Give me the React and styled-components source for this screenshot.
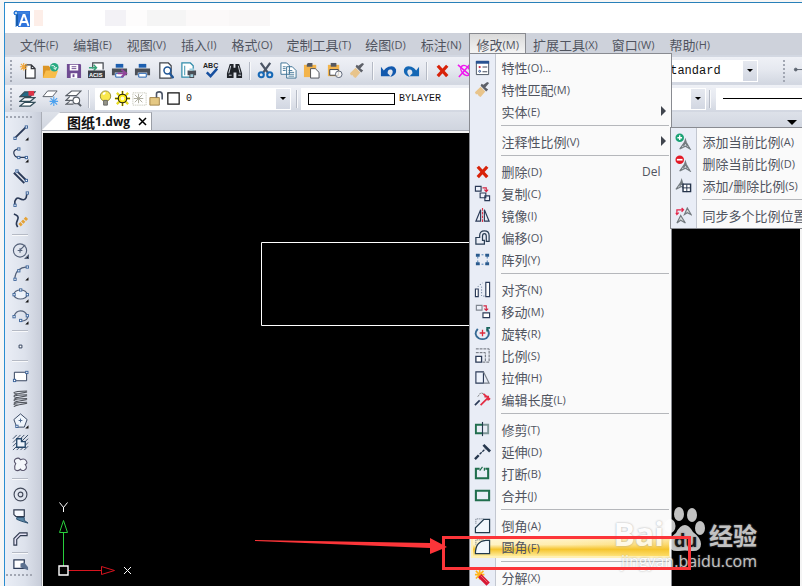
import React from "react";
import styled, { createGlobalStyle, css } from "styled-components";

const GlobalStyle = createGlobalStyle`
  * { box-sizing: border-box; }
  html, body, #root { height: 100%; }
  body {
    margin: 0;
    background: #f7f6f5;
    color: #50545f;
    font-family: "Open Sans", "Noto Sans CJK SC", sans-serif;
    font-size: 13px;
    overflow: hidden;
  }
  button, select { font: inherit; color: inherit; margin: 0; }
`;

/* ---------- icons, all on an 18 x 18 grid ---------- */
const N = "#2b3a57";
const dot = (x, y, k) => (
  <rect key={k} x={x - 1} y={y - 1} width="2.4" height="2.4" fill="#fff" stroke="#3d659b" strokeWidth="1" />
);
const corner = <path d="M17.5 14v3.5H14z" fill="#111" />;
const brush = (
  <g>
    <path d="M1 12l6-6 5 5-5 6-2-1-1-2-2 0z" fill="#e8c48b" />
    <path d="M7 5l6 6 2-2-3-2 4-5-2-1-4 3-2-1z" fill="#5d6068" />
  </g>
);
const cross = <path d="M4 4l10 11M14 4L4 15" stroke="#d82209" strokeWidth="3.4" fill="none" />;
const printer = (
  <g>
    <path d="M5 2h8v4H5z" fill="#1d5fb0" />
    <path d="M1 7h16v7h-3v-3H4v3H1z" fill="#4b4f57" />
    <path d="M5 12h8v4H5z" fill="#fff" stroke="#1d5fb0" />
  </g>
);
const compass = (x, y) => (
  <path d={`M${x} ${y}l-1 3-5 7 6-3 5 3-4-7zM${x - 2} ${y + 7}l2-4 2 4`} fill="none" stroke="#747b80" strokeWidth="1.2" />
);
const page = <path d="M7 3h6l4 4v10H7z M13 3v4h4" fill="#fff" stroke="#33363c" strokeWidth="1.3" />;

const ICONS = {
  newFile: (<g>{page}<path d="M5 1v8M1 5h8M2 2l6 6M8 2L2 8" stroke="#f2a73a" strokeWidth="1.2" /></g>),
  open: (<g><path d="M1 4h6l2 2v11H1z" fill="#dc9526" /><path d="M4 9h13l-3 8H1z" fill="#f8bd4b" /><circle cx="13" cy="5.5" r="4.5" fill="#27aa82" /><path d="M10 4q4-1 4 3m-2-1l2 2 1.500-2.500" stroke="#fff" fill="none" /></g>),
  save: (<g><path d="M2 2h14l1 1v14H2z" fill="#6f4b92" /><path d="M5 3h9v6H5zM6 12h7v5H6z" fill="#fff" /><path d="M7 5h5M7 7h5" stroke="#6f4b92" /><path d="M8 13h2v3H8z" fill="#6f4b92" /></g>),
  acis: (<g><path d="M5 7V1h11v7" fill="#fff" stroke="#44484f" strokeWidth="1.300" /><path d="M1 6h8m-3-3l3 3-3 3" stroke="#35a278" fill="none" strokeWidth="1.5" /><path d="M0 9h18v8H0z" fill="#3d4046" /><text x="1" y="15.500" fontSize="6" fontWeight="700" fill="#fff" fontFamily="Liberation Sans">ACIS</text></g>),
  plot: (<g>{printer}<path d="M7 12h8m-4-4l5 4-5 4" fill="none" stroke="#92459b" strokeWidth="2" /></g>),
  printer,
  preview: (<g><path d="M3 1h9l3 3v13H3z" fill="#fff" stroke="#41454c" strokeWidth="1.3" /><circle cx="11" cy="9" r="3.600" fill="#fff" stroke="#1f5595" strokeWidth="1.6" /><path d="M13.500 12l4 5" stroke="#1f5595" strokeWidth="2.4" /></g>),
  publish: (<g><path d="M2 1h9l3 3v12H2z" fill="#fff" stroke="#318caa" strokeWidth="1.3" /><path d="M5 4v10" stroke="#318caa" /><path d="M8 9h9v5h-2v3h-5v-3H8z" fill="#4b4f57" /><path d="M10 7h5v2h-5zM11 13h3v3h-3z" fill="#9fd0df" /></g>),
  spell: (<g><text x="0" y="6" fontSize="7.5" fontWeight="700" fill="#222" fontFamily="Liberation Sans">ABC</text><path d="M4 11l4 4 7-8" fill="none" stroke="#164f9f" strokeWidth="2.600" /></g>),
  find: (<g fill="#1f2329"><path d="M4 2h4v4h2V2h4l3 10v5h-6v-6H8v6H1v-5z" /><path d="M5 4l-2 8M13 4l2 8M3 14h3M13 14h3" stroke="#d7dbe2" strokeWidth="1" /></g>),
  cut: (<g fill="none"><path d="M4 1l8 11M14 1L6 12" stroke="#4b5565" strokeWidth="2.4" /><circle cx="4.500" cy="13.500" r="2.700" stroke="#1769b6" strokeWidth="2.2" /><circle cx="13.500" cy="13.500" r="2.700" stroke="#1769b6" strokeWidth="2.2" /></g>),
  copyDoc: (<g fill="#fff" stroke="#3c7194"><path d="M1 1h6l3 3v9H1zM7 5h6l4 4v8H7z" /><path d="M3 5h3M3 7h3M3 9h3M9 9h4M9 11h6M9 13h6M9 15h6" strokeWidth=".9" /></g>),
  paste: (<g><path d="M1 3h13v13H1z" fill="#f3b44b" /><path d="M5 1h5v4H4V3z" fill="#565961" /><path d="M8 7h5l4 4v6H8z" fill="#fff" stroke="#4d5057" /></g>),
  pasteBlock: (<g><path d="M2 3h12v12H2z" fill="#f3b44b" /><path d="M5 1h6v4H5z" fill="#565961" /><path d="M4 8h9v6H4z" fill="#fff" stroke="#3b414c" /><circle cx="13.500" cy="13" r="3.500" fill="#fffb" stroke="#596375" /></g>),
  brush,
  undo: <path d="M1 5v10h10l-3-3q0-5 4-4 3 2 0 6l-1 2q7-2 6-8-2-5-8-3-3 1-5 4z" fill="#1259ae" />,
  redo: <path d="M17 5v10H7l3-3q0-5-4-4-3 2 0 6l1 2q-7-2-6-8 2-5 8-3 3 1 5 4z" fill="#1467b5" />,
  cross,
  eraseAll: <g fill="none" stroke="#ef18ef" strokeWidth="1.600"><path d="M1 3l15 13M2 16L14 2" /><ellipse cx="9" cy="9" rx="6" ry="4" transform="rotate(50 9 9)" /></g>,
  layers: (<g strokeWidth="1.300" stroke="#334e5a"><path d="M6 13h11l-5 4H1z" fill="#fff" /><path d="M6 8h11l-5 4H1z" fill="#fff" /><path d="M6 2h11l-5 5H1z" fill="#246b86" /><path d="M10 1h6v5h-6z" fill="#de3447" stroke="none" /></g>),
  layerNew: (<g><path d="M6 1h10l-5 6H1z" fill="#fff" stroke="#585e66" /><path d="M12.500 7v10M8 12h9M9 8.500l7 7M16 8.500l-7 7" stroke="#4ba1ef" strokeWidth="1.2" /></g>),
  layerFind: (<g fill="#fff" stroke="#585e66" strokeWidth="1.2"><path d="M5 12L1 15h8M5 7l-4 4h8l3-2M7 1h10l-5 5H1z" /><circle cx="12" cy="11" r="3.500" /><path d="M14 14l3 3" strokeWidth="2" /></g>),
  bulb: (<g><circle cx="9" cy="6.500" r="5.500" fill="#fae84e" stroke="#978c36" /><path d="M7 11h4v5H7z" fill="#979688" stroke="#666" /><path d="M7 5q0-2 2-2" stroke="#fff" strokeWidth="2" fill="none" /></g>),
  sun: (<g><path d="M9 1v16M1 9h16M3 3l12 12M15 3L3 15" stroke="#e8dc20" strokeWidth="2.400" /><path d="M9 1v16M1 9h16" stroke="#55501c" strokeWidth="1" /><circle cx="9" cy="9" r="4.500" fill="#ffee13" stroke="#252315" strokeWidth="1.2" /><circle cx="9" cy="9" r="2" fill="#fffed0" /></g>),
  freeze: (<g><path d="M2 3h14v13H2z" fill="none" stroke="#b9b9a8" strokeDasharray="1 1" /><path d="M8 4v10M3 9h10M4 5l8 8M12 5l-8 8" stroke="#aaa99a" /></g>),
  lock: (<g><path d="M2 8h10v8H2z" fill="#e5c883" stroke="#a38348" /><path d="M9 8V4q0-2 3-2t3 3v5" fill="none" stroke="#4c5567" strokeWidth="1.700" /></g>),
  swatch: <path d="M3 3h12v12H3z" fill="#fff" stroke="#111" strokeWidth="1.300" />,
  dim: <g stroke="#5c6470" fill="#5c6470"><path d="M4 8h14" /><circle cx="4" cy="8" r="1.500" /></g>,

  line: <g><path d="M3 15L15 3" stroke={N} strokeWidth="2" />{dot(3, 15)}{dot(15, 3)}{corner}</g>,
  polyline: <g><path d="M7 3Q1 4 2 8t5 4h9" fill="none" stroke={N} strokeWidth="1.300" />{dot(7, 3)}{dot(7, 12)}{dot(15, 12)}{corner}</g>,
  multiline: <g><path d="M5 3l11 11M2 5l11 11" stroke={N} strokeWidth="2" />{dot(5, 3)}{dot(15, 13)}</g>,
  spline: <g><path d="M3 16V12q2-5 5-3 5 3 7-1l1-5" fill="none" stroke={N} strokeWidth="1.700" />{dot(3, 16)}{dot(16, 3)}</g>,
  sketch: <g><path d="M2 2q6 2 4 6t-1 6l1 2" fill="none" stroke={N} strokeWidth="1.700" /><path d="M8 14l8-8" stroke="#e5a236" strokeWidth="3.500" strokeDasharray="3 1" /></g>,
  circle: <g fill="none" stroke="#536078" strokeWidth="1.200"><circle cx="8.500" cy="9" r="7" /><path d="M6 9h5M8.500 6.500v5M9 8l5-5" />{corner}</g>,
  arc: <g><path d="M3 15Q4 4 16 3" fill="none" stroke="#536078" strokeWidth="1.200" />{dot(3, 16)}{dot(7, 7)}{dot(16, 3)}{corner}</g>,
  ellipse: <g><ellipse cx="9" cy="9" rx="7" ry="4.800" fill="#edf2fa" stroke="#536078" strokeWidth="1.200" />{dot(2, 9)}{dot(9, 4)}{dot(16, 9)}{corner}</g>,
  ellipseArc: <g><path d="M2 9Q4 3 9 3t7 5-6 6" fill="none" stroke="#536078" strokeWidth="1.200" />{dot(2, 9)}{dot(16, 8)}{dot(9, 13)}{corner}</g>,
  point: <path d="M7.500 7.500h3v3h-3z" fill="#fff" stroke={N} />,
  rectangle: <g><path d="M2.500 4.500h13v9h-13z" fill="#fff" stroke={N} />{dot(2.500, 13)}{dot(15.500, 4.500)}</g>,
  helix: <g fill="none" stroke="#50545c" strokeWidth="1.100">{[3, 7, 11, 15].map((y) => <path key={y} d={`M16 ${y - 2}q-13 0-14 2 1 2 14-1-13 2-14 4`} />)}</g>,
  polygon: <g><path d="M9 2l7 6-3 8H5L2 8z" fill="#eff5fc" stroke="#34445f" /><path d="M7 9h4M9 7v4" stroke="#49658b" />{dot(5, 15)}{corner}</g>,
  region: <g><path d="M1 5l4-4M1 9l8-8M1 13L13 1M1 17L17 1M5 17L17 5M9 17l8-8M13 17l4-4" stroke="#354964" /><path d="M5 5h5v3h4v6H5z" fill="#eef4fc" stroke="#254769" strokeWidth="1.400" /></g>,
  cloud: <path d="M4 8Q1 5 4 3q3-2 5 1 4-2 6 1 2 3-1 4 3 4-1 6-3 1-4-1-4 3-6 0-1-3 1-6z" fill="#f4f7fb" stroke="#59566d" strokeWidth="1.200" />,
  donut: <g fill="none" stroke="#42495a" strokeWidth="1.200"><circle cx="9" cy="9" r="6.800" /><circle cx="9" cy="9" r="2.500" /></g>,
  wipeout: <g><path d="M2 2h11v7H4L2 7z" fill="#f7faff" stroke="#303b50" strokeWidth="1.300" /><path d="M5 10h8v3l4 3-7-2-5-2z" fill="#5985a5" stroke="#284c6c" /></g>,
  pipe: <path d="M2 16v-7l6-6h8v3H9l-4 4v6z" fill="#e5e3f5" stroke="#303b50" strokeWidth="1.200" />,
  hatch: <g><path d="M2 4h11v9H2z" fill="#fff" stroke={N} strokeWidth="1.300" /><path d="M9 12V8l4-1 4 5v3z" fill="#5c7190" /></g>,

  properties: <g><path d="M2.500 2.500h13v14h-13z" fill="#fff" stroke="#47515e" /><path d="M2 2h14v3H2z" fill="#285291" /><path d="M9 8.500h5M9 13.500h5" stroke="#394151" /><circle cx="6" cy="8.500" r="1.200" fill="#c82e48" /><circle cx="6" cy="13" r="1" fill="none" stroke="#294d8b" /></g>,
  copyObj: <g fill="none" stroke={N} strokeWidth="1.200"><path d="M1.500 1.500h6v5h-6zM6.500 8.500h6v5h-6zM11.500 11.500h5v5h-5z" fill="#edf1fa" /><path d="M9 3h4v4m-2-2l2 2 2-2" stroke="#d42440" /></g>,
  mirror: <g fill="none" stroke={N} strokeWidth="1.200"><path d="M7 3v12H2zM11 3v12h5z" /><path d="M9 1v16" stroke="#dc3147" strokeDasharray="3 1" /></g>,
  offset: <g fill="none" stroke="#293d54" strokeWidth="1.300"><path d="M2 16V9h4V7q0-5 5-5t5 5v6h-3V8q0-3-2-3T9 8v4h2v4z" /></g>,
  array: <g><path d="M4 4h10v10H4z" fill="none" stroke="#477bb3" strokeDasharray="2 2" /><path d="M2 3h4v3H2zM12 3h4v3h-4zM2 12h4v3H2zM12 12h4v3h-4z" fill="#28598d" /></g>,
  align: <g fill="none" stroke={N} strokeWidth="1.200"><path d="M1.500 8.500h3v8h-3zM12.500 1.500h4v15h-4z" fill="#fff" /><path d="M4 6l5-4M8 6v10h3" stroke="#667993" strokeDasharray="1 2" /></g>,
  move: <g fill="none" strokeWidth="1.200"><path d="M2.500 2.500h6v5h-6z" stroke="#808791" fill="#edf1fa" /><path d="M9.500 10.500h7v5h-7z" stroke={N} fill="#fff" /><path d="M10 3h3v5m-2-2l2 2 2-2" stroke="#d42440" /></g>,
  rotate: <g fill="none" strokeWidth="2"><path d="M4 4Q-1 10 5 14q4 2 8 0 5-4 1-10" stroke="#356994" /><path d="M14 7V3h3" stroke="#1a655d" /><path d="M9 5v7M6 8.500h6" stroke="#dd2b3c" strokeWidth="1.400" /></g>,
  scale: <g fill="none" stroke="#60656e"><path d="M2 2h14v14H9M2 6h10v10" strokeDasharray="3 1" /><path d="M2 10h6v6H2z" stroke={N} strokeWidth="1.400" fill="#fff" /></g>,
  stretch: <g fill="none" strokeWidth="1.200"><path d="M2 3h8v12H2z" fill="#eef3fc" stroke={N} /><path d="M10 3l6 12h-6" stroke="#79808b" /></g>,
  lengthen: <g fill="none" strokeWidth="1.800"><path d="M1 15l5-5" stroke={N} /><path d="M4 6l3-4 4 1" stroke="#777" strokeWidth="1" strokeDasharray="2 1" /><path d="M7 15l8-8M10 3l7 6M11 6h4v4" stroke="#e32b43" /></g>,
  trim: <g fill="none" strokeWidth="2"><path d="M9 4H2v9h7" stroke="#206e4d" /><path d="M9 4h6v9H9" stroke="#7e9697" /><path d="M9 1v15" stroke="#23384d" strokeWidth="1.200" /></g>,
  extend: <g fill="none" stroke="#25364d"><path d="M10 2l7 7" strokeWidth="2.800" /><path d="M1 17l4-4" strokeWidth="2.500" /><path d="M6 12l6-6" strokeDasharray="3 1" strokeWidth="1.400" /></g>,
  breakObj: <g fill="none" stroke="#206e4d" strokeWidth="2.200"><path d="M6 4H2v10h13V4h-3" /><path d="M6 6l3-4M11 6V3" strokeWidth="1.300" /></g>,
  join: <path d="M2 4h14v10H2z" fill="none" stroke="#206e4d" strokeWidth="2.200" />,
  chamfer: <g><path d="M2 7V2h8" fill="none" stroke="#53606e" strokeDasharray="1 1" /><path d="M1.500 16.500v-5l9-9h6v14z" fill="#f2f7fc" stroke="#21394c" strokeWidth="1.300" /></g>,
  fillet: <g><path d="M2 7V2h8" fill="none" stroke="#53606e" strokeDasharray="1 1" /><path d="M1.500 16.500q0-13 11-14h4v14z" fill="#f2f7fc" stroke="#21394c" strokeWidth="1.300" /></g>,
  explode: <g><path d="M6 1v10M1 6h10M2 2l8 8M10 2l-8 8" stroke="#ffb51c" strokeWidth="1.700" /><path d="M6 7l9 9" stroke="#d71835" strokeWidth="5" /><path d="M7 7l7 7" stroke="#f36c71" /></g>,
  scaleAdd: <g>{compass(11, 7)}<circle cx="5" cy="5" r="4.500" fill="#1ba275" /><path d="M2.500 5h5M5 2.500v5" stroke="#fff" strokeWidth="1.500" /></g>,
  scaleDel: <g>{compass(11, 7)}<circle cx="5" cy="5" r="4.500" fill="#e31926" /><path d="M2 5h6" stroke="#fff" strokeWidth="1.800" /></g>,
  scaleEdit: <g>{compass(7, 3)}<path d="M8.500 7.500h8v8h-8z" fill="#fff" stroke="#25334a" strokeWidth="1.500" /><path d="M8 11.500h8M12.500 8v8" stroke="#25334a" /></g>,
  scaleSync: <g><path d="M2 8V3h7m-2-2l2 2-2 2M1 6l1 2 2-2" stroke="#e22549" strokeWidth="1.300" fill="none" /><path d="M13 1l-3 7 3-2 4 2zM6 9l-4 8 4-3 5 3z" fill="#d7dcda" stroke="#747b80" strokeWidth="1.200" /></g>,
};

const Glyph = styled.svg`
  display: block;
  flex: none;
  width: 17px;
  height: 17px;
`;
const Icon = ({ name }) => (
  <Glyph viewBox="0 0 18 18" aria-hidden="true">{ICONS[name]}</Glyph>
);

/* ---------- window ---------- */
const Stage = styled.div`
  position: relative;
  height: 100vh;
  padding: 2px 0 0 4px;
  overflow: hidden;
`;
const Window = styled.div`
  display: flex;
  flex-direction: column;
  height: 100%;
  border-top: 1px solid #2880b9;
  border-left: 1px solid #2a8cd0;
  background: #d3d8e2;
`;
const TitleBar = styled.header`
  display: flex;
  align-items: center;
  flex: none;
  height: 30px;
  padding-left: 8px;
  background: #fff;
`;
const Logo = styled.svg`
  width: 17px;
  height: 17px;
  margin-right: 4px;
`;
const Smudge = styled.span`
  width: ${(p) => p.$w}px;
  height: 16px;
  background: ${(p) => p.$c};
`;

const MenuBar = styled.nav`
  display: flex;
  flex: none;
  gap: 1px;
  height: 22px;
  padding-left: 8px;
  background: #ced2db;
`;
const MenuSlot = styled.div`
  position: relative;
  flex: none;
`;
const MenuTitle = styled.button`
  display: flex;
  align-items: center;
  height: 22px;
  padding: 0 ${(p) => (p.$long ? 5 : 6)}px;
  border: 1px solid transparent;
  background: none;
  white-space: nowrap;
  ${(p) => p.$open && css`
    border-color: #898b91;
    border-bottom-color: #f5f5f5;
    background: linear-gradient(#dadada, #f5f5f5);
  `}
`;
const Key = styled.span`
  font-size: 11px;
  padding-top: 1px;
`;

const Toolbars = styled.div`
  display: flex;
  flex: none;
  flex-direction: column;
  gap: 1px;
  padding-top: 2px;
`;
const ToolRow = styled.div`
  display: flex;
  align-items: center;
  height: 27px;
  padding-left: 5px;
  overflow: hidden;
  background: linear-gradient(#eff1f6, #e6e9f0 45%, #d2d7e1);
`;
const Grip = styled.span`
  flex: none;
  width: ${(p) => (p.$flat ? "28px" : "3px")};
  height: ${(p) => (p.$flat ? "3px" : "22px")};
  margin: ${(p) => (p.$flat ? "3px 0 2px" : "0 3px 0 0")};
  background: radial-gradient(circle at 1px 1px, #a2a7b3 1px, transparent 1px) 0 0 / 4px 4px;
`;
const ToolButton = styled.button`
  display: flex;
  align-items: center;
  justify-content: center;
  flex: none;
  width: 23px;
  height: 22px;
  padding: 0;
  border: 0;
  background: none;
`;
const Split = styled.span`
  flex: none;
  width: 2px;
  height: 18px;
  margin: 0 3px;
  border-left: 1px solid #b5bac5;
  border-right: 1px solid #f8f9fb;
`;
const Gap = styled.span`
  flex: 0 0 ${(p) => p.$w}px;
`;
const Combo = styled.label`
  position: relative;
  display: flex;
  align-items: center;
  flex: none;
  width: ${(p) => p.$w}px;
  height: 22px;
  padding-left: ${(p) => p.$pad || 2}px;
  background: #fff;
  color: #111;
`;
const Select = styled.select`
  flex: 1;
  min-width: 0;
  height: 22px;
  padding: 0 18px 0 4px;
  border: 0;
  appearance: none;
  background: transparent;
  color: #111;
  font-family: "Liberation Mono", monospace;
  font-size: 10px;
`;
const WideSelect = styled(Select)`
  font-size: 12px;
`;
const DropMark = styled.span`
  position: absolute;
  top: 1px;
  right: 1px;
  display: grid;
  place-items: center;
  width: 14px;
  height: 20px;
  background: linear-gradient(#e6e9f0, #d2d7e2);
  pointer-events: none;
`;
const Triangle = styled.span`
  width: 0;
  height: 0;
  border: solid transparent;
  border-width: ${(p) => p.$s || 3}px ${(p) => p.$s || 3}px 0;
  border-top-color: #000;
`;
const ComboIcons = styled.span`
  display: flex;
`;
const ColorBar = styled.span`
  width: 87px;
  height: 12px;
  border: 1px solid #000;
`;
const LineSample = styled.span`
  flex: 1 0 80px;
  height: 1px;
  background: #000;
`;

const Body = styled.div`
  display: flex;
  flex: 1;
  min-height: 0;
`;
const SideBar = styled.aside`
  display: flex;
  flex: none;
  flex-direction: column;
  align-items: center;
  width: 37px;
  padding: 1px 6px 0 0;
  overflow: hidden;
  border-right: 1px solid #a9adb6;
  background: linear-gradient(90deg, #eaeef6, #dde2ec 55%, #c8cdd9);
`;
const SideButton = styled(ToolButton)`
  width: 28px;
  height: ${(p) => (p.$short ? "14px" : "22px")};
  overflow: hidden;
`;
const SideSplit = styled.span`
  flex: none;
  width: 16px;
  height: 2px;
  margin: 3px 0;
  border-top: 1px solid #b5bac5;
  border-bottom: 1px solid #f8f9fb;
`;
const Workspace = styled.main`
  display: flex;
  flex: 1;
  flex-direction: column;
  min-width: 0;
  padding-right: 2px;
  background: #f4f4f4;
`;
const TabStrip = styled.div`
  display: flex;
  align-items: flex-end;
  justify-content: space-between;
  flex: none;
  height: 19px;
  margin-right: -2px;
  padding-right: 5px;
  border-bottom: 1px solid #a9adb6;
  background: linear-gradient(#dde1e9, #d0d5df);
`;
const Tab = styled.div`
  display: flex;
  align-items: center;
  gap: 8px;
  height: 18px;
  padding: 0 4px 0 25px;
  background: #fff;
  border-right: 1px solid #9599a2;
  border-top: 1px solid #b9bcc4;
  clip-path: polygon(18px 0, 100% 0, 100% 100%, 0 100%);
  color: #111;
  font-family: "Open Sans", "Noto Sans CJK SC", sans-serif;
  font-size: 12px;
  font-weight: 700;
  white-space: nowrap;
`;
const TabTitle = styled.span`
  display: flex;
  align-items: center;
`;
const TabName = styled.span`
  font-size: 14px;
`;
const TabClose = styled.button`
  display: flex;
  padding: 0;
  border: 0;
  background: none;
`;
const TabMenu = styled.button`
  display: flex;
  padding: 5px 0;
  border: 0;
  background: none;
`;
const Canvas = styled.div`
  position: relative;
  flex: 1;
  min-height: 0;
  margin: 2px 0 0 1px;
  overflow: hidden;
  background: #000;
`;
const Drawing = styled.svg`
  position: absolute;
  inset: 0;
  width: 100%;
  height: 100%;
`;
const Ucs = styled.svg`
  position: absolute;
  left: 0;
  bottom: 0;
  width: 100px;
  height: 96px;
`;

/* ---------- drop-down menu ---------- */
const Menu = styled.ul`
  position: absolute;
  z-index: 2;
  top: ${(p) => (p.$sub ? "-3px" : "20px")};
  left: ${(p) => (p.$sub ? "100%" : "0")};
  width: ${(p) => (p.$sub ? "170px" : "203px")};
  margin: 0;
  padding: 2px 1px;
  list-style: none;
  border: 1px solid #898b91;
  background: linear-gradient(90deg, #e9edf6 25px, #c3c7d0 25px, #c3c7d0 26px, #fafafa 26px);
`;
const MenuRow = styled.li`
  position: relative;
`;
const MenuItem = styled.button`
  display: flex;
  align-items: center;
  width: 100%;
  height: 22px;
  padding: 0 10px 0 3px;
  border: 0;
  background: none;
  white-space: nowrap;
  text-align: left;
  ${(p) => p.$active && css`
    border: 1px solid #fff0b5;
    border-width: 1px 1px 2px 2px;
    padding: 0 9px 0 1px;
    background: linear-gradient(#fff8dccc, #fff1b866 40%, #f5c42e 65%, #ffe88199),
      linear-gradient(90deg, #fff6d5, #ffe79a 50%, #f9c83a);
  `}
`;
const Label = styled.span`
  display: flex;
  align-items: center;
  flex: 1;
  padding-left: 10px;
`;
const Shortcut = styled.span`
  font-size: 12px;
`;
const SubArrow = styled.span`
  border: solid transparent;
  border-width: 5px 0 5px 5px;
  border-left-color: #41454e;
  margin-right: -6px;
`;
const MenuSplit = styled.li`
  height: 1px;
  margin: 3px 1px 4px 30px;
  background: #b5b7bb;
`;

/* ---------- overlays ---------- */
const Watermark = styled.div`
  position: absolute;
  z-index: 3;
  right: 45px;
  bottom: 16px;
  display: flex;
  flex-direction: column;
  align-items: flex-end;
  opacity: .76;
  color: #fff;
  text-shadow: 0 0 2px #8a8a8a;
  font-family: "Open Sans", "Noto Sans CJK SC", sans-serif;
  pointer-events: none;
`;
const Brand = styled.div`
  display: flex;
  align-items: flex-end;
  height: 48px;
  font-size: 32px;
  font-weight: 700;
  line-height: 36px;
`;
const BrandCn = styled.span`
  padding-left: 3px;
  font-size: 24px;
  line-height: 32px;
`;
const Paw = styled.svg`
  width: 42px;
  height: 46px;
`;
const Site = styled.div`
  font-size: 16px;
  line-height: 18px;
`;
const Callout = styled.svg`
  position: absolute;
  z-index: 4;
  left: 250px;
  top: 530px;
  width: 446px;
  height: 44px;
  pointer-events: none;
`;

const MENUS = [
  ["文件", "F"], ["编辑", "E"], ["视图", "V"], ["插入", "I"], ["格式", "O"], ["定制工具", "T"],
  ["绘图", "D"], ["标注", "N"], ["修改", "M"], ["扩展工具", "X"], ["窗口", "W"], ["帮助", "H"],
];
const SCALE_MENU = [
  ["scaleAdd", "添加当前比例", "(A)"], ["scaleDel", "删除当前比例", "(D)"],
  ["scaleEdit", "添加/删除比例", "(S)"], null, ["scaleSync", "同步多个比例位置", ""],
];
const MODIFY_MENU = [
  ["properties", "特性", "(O)..."], ["brush", "特性匹配", "(M)"], ["", "实体", "(E)", { arrow: true }], null,
  ["", "注释性比例", "(V)", { arrow: true, sub: SCALE_MENU }], null,
  ["cross", "删除", "(D)", { shortcut: "Del" }], ["copyObj", "复制", "(C)"], ["mirror", "镜像", "(I)"],
  ["offset", "偏移", "(O)"], ["array", "阵列", "(Y)"], null,
  ["align", "对齐", "(N)"], ["move", "移动", "(M)"], ["rotate", "旋转", "(R)"], ["scale", "比例", "(S)"],
  ["stretch", "拉伸", "(H)"], ["lengthen", "编辑长度", "(L)"], null,
  ["trim", "修剪", "(T)"], ["extend", "延伸", "(D)"], ["breakObj", "打断", "(B)"], ["join", "合并", "(J)"], null,
  ["chamfer", "倒角", "(A)"], ["fillet", "圆角", "(F)", { active: true }], null, ["explode", "分解", "(X)"],
];
const STANDARD = [
  "newFile", "open", "save", "acis", "plot", "printer", "preview", "publish", "spell", "find", null,
  "cut", "copyDoc", "paste", "pasteBlock", "brush", null, "undo", "redo", null, "cross", "eraseAll",
];
const DRAW = [
  "line", "polyline", "multiline", "spline", "sketch", null, "circle", "arc", "ellipse", "ellipseArc", null,
  "point", null, "rectangle", "helix", "polygon", "region", "cloud", null, "donut", "wipeout", "pipe", null,
];

function DropMenu({ items, sub, label }) {
  return (
    <Menu $sub={sub} aria-label={label}>
      {items.map((item, i) => {
        if (!item) return <MenuSplit key={i} role="separator" />;
        const [icon, text, key, extra = {}] = item;
        return (
          <MenuRow key={i}>
            <MenuItem $active={extra.active}>
              <Icon name={icon} />
              <Label>{text}<Key>{key}</Key></Label>
              {extra.shortcut && <Shortcut>{extra.shortcut}</Shortcut>}
              {extra.arrow && <SubArrow />}
            </MenuItem>
            {extra.sub && <DropMenu items={extra.sub} sub label={text} />}
          </MenuRow>
        );
      })}
    </Menu>
  );
}

function DropDown({ width, pad, label, value, wide, children }) {
  const Field = wide ? WideSelect : Select;
  return (
    <Combo $w={width} $pad={pad}>
      {children}
      {value && <Field aria-label={label} defaultValue={value}><option>{value}</option></Field>}
      <DropMark><Triangle /></DropMark>
    </Combo>
  );
}

const tools = (names) =>
  names.map((n, i) => (n ? <ToolButton key={i} aria-label={n}><Icon name={n} /></ToolButton> : <Split key={i} />));

export default function App() {
  return (
    <Stage>
      <GlobalStyle />
      <Window>
        <TitleBar>
          <Logo viewBox="0 0 17 17" aria-label="CAD">
            <path d="M1 1h16v16H5V5H1z" fill="#2f74dc" />
            <path d="M0 3h16M3 0v17" stroke="#4f91dc" />
            <path d="M3 4h2v12H3z" fill="#175dac" />
            <path d="M6.500 16L10.500 5h1L15.500 16M8 12h6" fill="none" stroke="#fff" strokeWidth="2" />
            <circle cx="3" cy="3" r="1.500" fill="#fff" stroke="#1b72d2" />
          </Logo>
          <Smudge $w={9} $c="#fdeee8" />
          <Gap $w={62} />
          <Smudge $w={21} $c="#f3f2f6" />
          <Smudge $w={21} $c="#fdfcfc" />
          <Smudge $w={39} $c="#f5f5f5" />
          <Smudge $w={43} $c="#fbf9f9" />
          <Smudge $w={41} $c="#f9f7f7" />
        </TitleBar>
        <MenuBar>
          {MENUS.map(([text, key]) => {
            const open = key === "M";
            return (
              <MenuSlot key={text}>
                <MenuTitle $open={open} $long={text.length > 2}>{text}<Key>({key})</Key></MenuTitle>
                {open && <DropMenu items={MODIFY_MENU} label={text} />}
              </MenuSlot>
            );
          })}
        </MenuBar>
        <Toolbars>
          <ToolRow>
            <Grip />
            {tools(STANDARD)}
            <Gap $w={180} />
            <DropDown width={101} label="文字样式" value="Standard" wide />
            <Gap $w={25} />
            <Grip />
            <ToolButton aria-label="dim"><Icon name="dim" /></ToolButton>
          </ToolRow>
          <ToolRow>
            <Grip />
            {tools(["layers", "layerNew", "layerFind", null])}
            <Gap $w={2} />
            <DropDown width={196} label="图层" value="0">
              <ComboIcons>
                {["bulb", "sun", "freeze", "lock", "swatch"].map((n) => <Icon key={n} name={n} />)}
              </ComboIcons>
            </DropDown>
            <Gap $w={2} /><Split />
            <DropDown width={197} pad={7} label="颜色" value="BYLAYER"><ColorBar /></DropDown>
            <Split />
            <DropDown width={200} />
            <Split />
            <Gap $w={2} />
            <DropDown width={240} pad={7}><LineSample /></DropDown>
          </ToolRow>
        </Toolbars>
        <Body>
          <SideBar>
            <Grip $flat />
            {DRAW.map((n, i) => (n ? <SideButton key={i} aria-label={n}><Icon name={n} /></SideButton> : <SideSplit key={i} />))}
            <SideButton $short aria-label="hatch"><Icon name="hatch" /></SideButton>
            <Grip $flat />
            <SideButton aria-label="redo"><Icon name="redo" /></SideButton>
          </SideBar>
          <Workspace>
            <TabStrip>
              <Tab>
                <TabTitle><TabName>图纸</TabName>1.dwg</TabTitle>
                <TabClose aria-label="关闭">
                  <svg width="9" height="9" viewBox="0 0 9 9"><path d="M1 1l7 7M8 1L1 8" stroke="#000" strokeWidth="1.500" /></svg>
                </TabClose>
              </Tab>
              <TabMenu aria-label="图纸列表"><Triangle $s={5} /></TabMenu>
            </TabStrip>
            <Canvas>
              <Drawing><path d="M218.500 109.500h300v83h-300z" fill="none" stroke="#fff" /></Drawing>
              <Ucs viewBox="0 0 100 96" fill="none">
                <path d="M20.500 76V42M16.500 42.500h8l-4-12z" stroke="#28cf3c" />
                <path d="M25 80.500h33M58.500 76.500v8l13-4z" stroke="#d8141f" />
                <path d="M16 76h9v9h-9z" stroke="#fff" strokeWidth="1.400" />
                <path d="M16.500 12.500l4 5 4-5M20.500 17v5M81 77l7 7M88 77l-7 7" stroke="#fff" />
              </Ucs>
            </Canvas>
          </Workspace>
        </Body>
      </Window>
      <Watermark>
        <Brand>
          Bai
          <Paw viewBox="0 0 42 46">
            <g fill="#fff">
              <ellipse cx="6" cy="20" rx="5.500" ry="7" />
              <ellipse cx="15" cy="8" rx="5" ry="7" />
              <ellipse cx="28" cy="9" rx="5" ry="7" />
              <ellipse cx="36" cy="22" rx="5" ry="7" />
              <path d="M21 19q4 0 8 7 8 6 8 12 0 8-10 7-6-1-12 0-10 1-10-7 0-6 7-11 4-8 9-8z" />
            </g>
            <text x="10" y="41" fontSize="18" fontWeight="700" fill="#222">du</text>
          </Paw>
          <BrandCn>经验</BrandCn>
        </Brand>
        <Site>jingyan.baidu.com</Site>
      </Watermark>
      <Callout viewBox="0 0 446 44">
        <path d="M193.500 7.500h246v31h-246z" fill="none" stroke="#fc3539" strokeWidth="3" />
        <path d="M5 10l175 3v-5l17 9-17 7v-6L5 11z" fill="#fc3539" />
      </Callout>
    </Stage>
  );
}
